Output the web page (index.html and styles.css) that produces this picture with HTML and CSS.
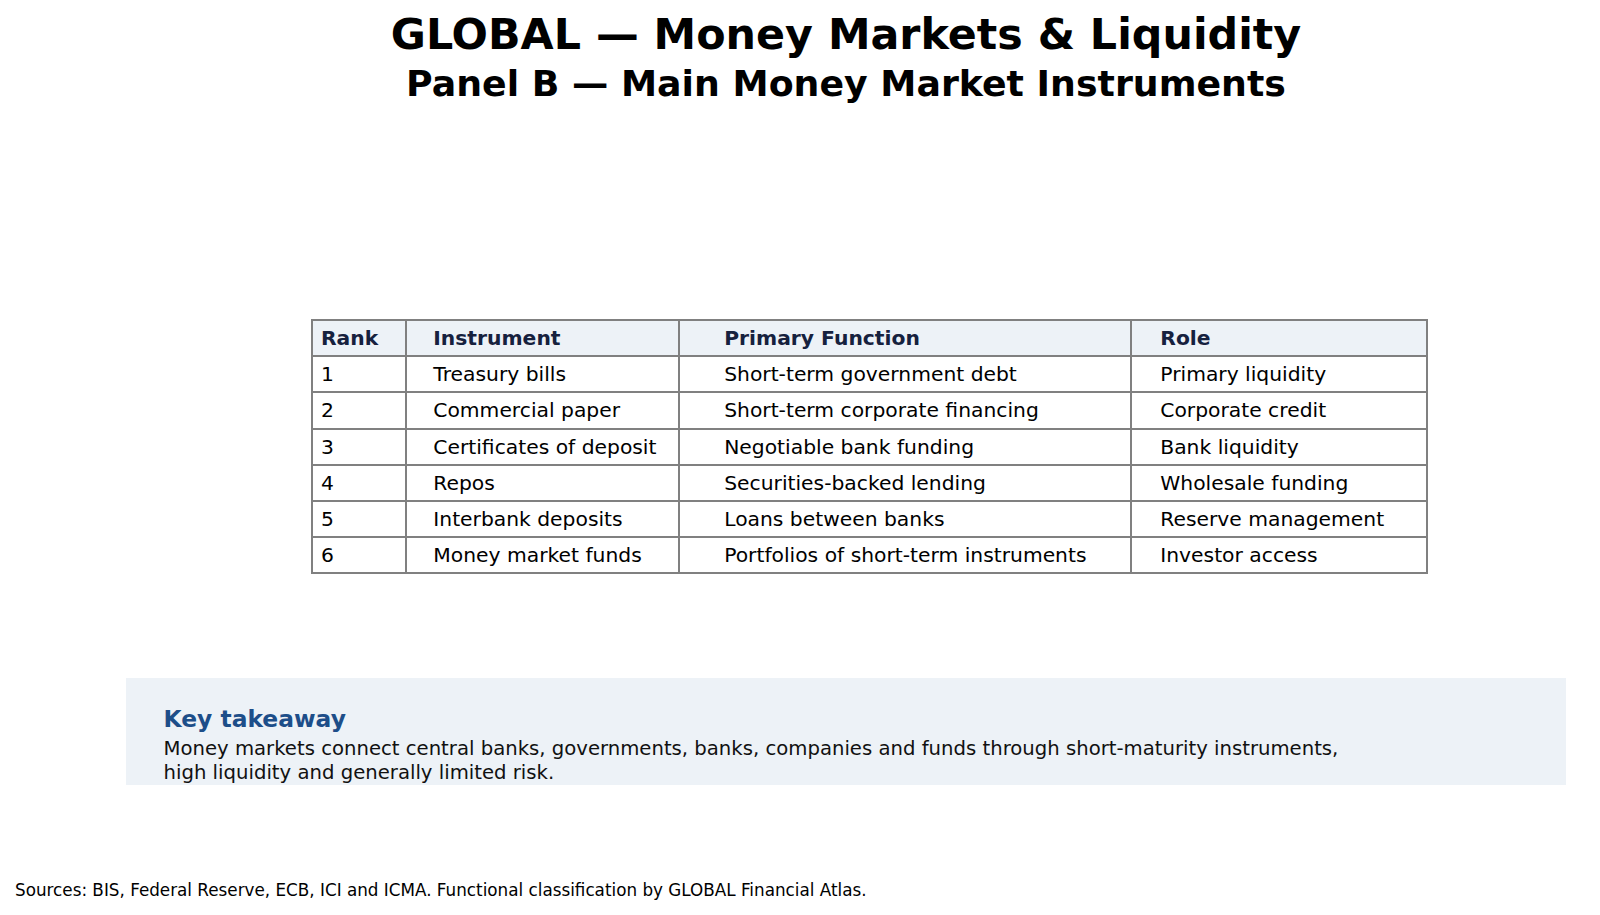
FILE: index.html
```html
<!DOCTYPE html>
<html lang="en">
<head>
<meta charset="utf-8">
<title>GLOBAL — Money Markets &amp; Liquidity</title>
<link rel="stylesheet" href="styles.css">
</head>
<body>
<div class="page">
  <header class="head">
    <h1 class="title">GLOBAL — Money Markets &amp; Liquidity</h1>
    <h2 class="subtitle">Panel B — Main Money Market Instruments</h2>
  </header>

  <div class="table">
    <div class="cell hd c1">Rank</div>
    <div class="cell hd c2">Instrument</div>
    <div class="cell hd c3">Primary Function</div>
    <div class="cell hd c4">Role</div>

    <div class="cell c1">1</div>
    <div class="cell c2">Treasury bills</div>
    <div class="cell c3">Short-term government debt</div>
    <div class="cell c4">Primary liquidity</div>

    <div class="cell c1">2</div>
    <div class="cell c2">Commercial paper</div>
    <div class="cell c3">Short-term corporate financing</div>
    <div class="cell c4">Corporate credit</div>

    <div class="cell c1">3</div>
    <div class="cell c2">Certificates of deposit</div>
    <div class="cell c3">Negotiable bank funding</div>
    <div class="cell c4">Bank liquidity</div>

    <div class="cell c1">4</div>
    <div class="cell c2">Repos</div>
    <div class="cell c3">Securities-backed lending</div>
    <div class="cell c4">Wholesale funding</div>

    <div class="cell c1">5</div>
    <div class="cell c2">Interbank deposits</div>
    <div class="cell c3">Loans between banks</div>
    <div class="cell c4">Reserve management</div>

    <div class="cell c1">6</div>
    <div class="cell c2">Money market funds</div>
    <div class="cell c3">Portfolios of short-term instruments</div>
    <div class="cell c4">Investor access</div>
  </div>

  <section class="takeaway">
    <h3 class="takeaway-title">Key takeaway</h3>
    <p class="takeaway-text">Money markets connect central banks, governments, banks, companies and funds through short-maturity instruments,<br>high liquidity and generally limited risk.</p>
  </section>

  <p class="sources">Sources: BIS, Federal Reserve, ECB, ICI and ICMA. Functional classification by GLOBAL Financial Atlas.</p>
</div>
</body>
</html>
```

FILE: styles.css
```css
html, body {
  margin: 0;
  padding: 0;
  background: #ffffff;
}

body {
  font-family: "DejaVu Sans", "Liberation Sans", sans-serif;
  color: #000000;
}

.page {
  width: 1600px;
  height: 915px;
  overflow: hidden;
  padding-top: 8.7px;
  box-sizing: border-box;
}

.head {
  padding-left: 92px;
  text-align: center;
}

.title {
  margin: 0;
  font-size: 42.8px;
  line-height: 50px;
  font-weight: bold;
  white-space: nowrap;
}

.subtitle {
  margin: 4.8px 0 0 0;
  font-size: 36.3px;
  line-height: 42px;
  font-weight: bold;
  white-space: nowrap;
}

.table {
  margin: 213.5px 0 0 310.5px;
  width: 1117.2px;
  display: grid;
  grid-template-columns: 94.5px 273px 451.7px 296px;
  grid-auto-rows: 36.19px;
  border-top: 2px solid #808080;
  border-left: 2px solid #808080;
  box-sizing: border-box;
}

.cell {
  display: flex;
  align-items: center;
  border-right: 2px solid #808080;
  border-bottom: 2px solid #808080;
  font-size: 20.3px;
  line-height: 24px;
  white-space: nowrap;
  color: #000000;
}

.hd {
  background: #edf2f7;
  font-weight: bold;
  color: #16213e;
}

.c1 { padding-left: 8.5px; }
.c2 { padding-left: 26.3px; }
.c3 { padding-left: 44.2px; }
.c4 { padding-left: 28.6px; }

.takeaway {
  margin: 103.4px 0 0 126px;
  width: 1440px;
  height: 107px;
  background: #edf2f7;
  padding: 28px 0 0 37.5px;
  box-sizing: border-box;
}

.takeaway-title {
  margin: 0;
  font-size: 23.4px;
  line-height: 27px;
  font-weight: bold;
  color: #1d4e89;
}

.takeaway-text {
  margin: 4.45px 0 0 0;
  font-size: 19.67px;
  line-height: 23.5px;
  color: #111111;
  white-space: nowrap;
}

.sources {
  margin: 95px 0 0 0;
  padding-left: 15px;
  font-size: 16.8px;
  line-height: 20px;
  color: #000000;
  white-space: nowrap;
}
```
